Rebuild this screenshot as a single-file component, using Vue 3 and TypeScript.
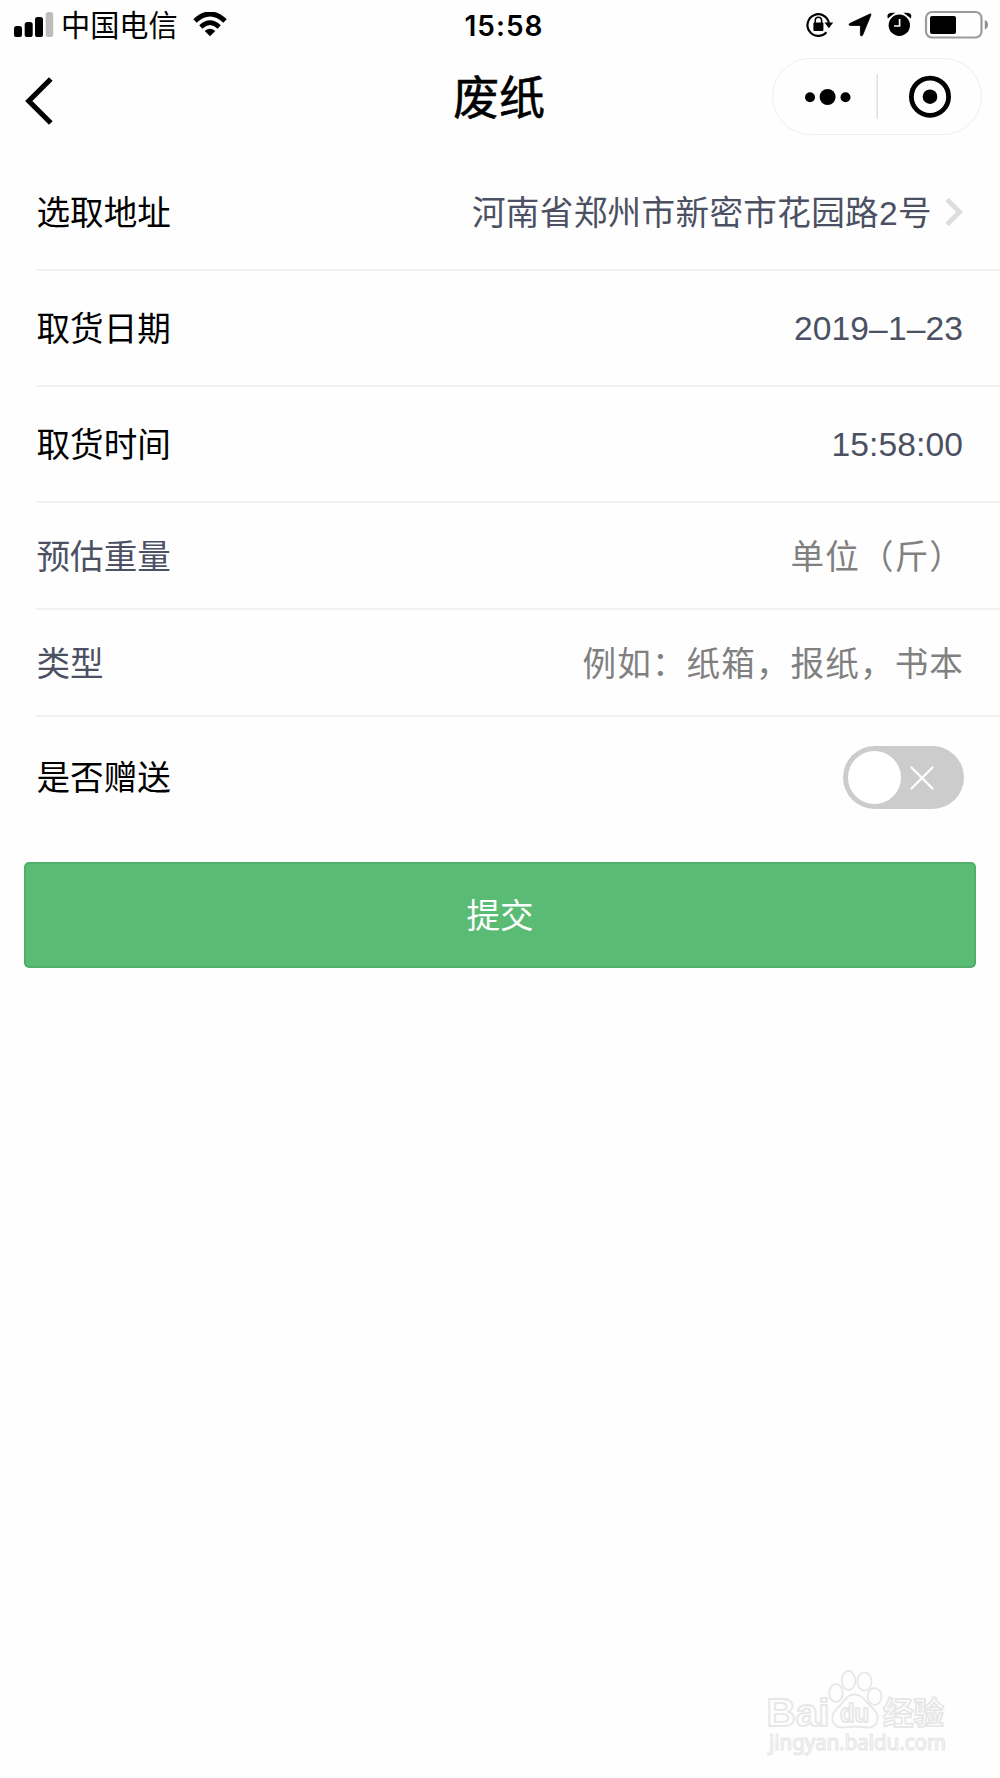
<script setup lang="ts">
import { ref } from 'vue'

interface Row {
  label: string
  value: string
  kind: 'picker' | 'link' | 'input'
}

const rows: Row[] = [
  { label: '选取地址', value: '河南省郑州市新密市花园路2号', kind: 'link' },
  { label: '取货日期', value: '2019–1–23', kind: 'picker' },
  { label: '取货时间', value: '15:58:00', kind: 'picker' },
  { label: '预估重量', value: '单位（斤）', kind: 'input' },
  { label: '类型', value: '例如：纸箱，报纸，书本', kind: 'input' },
]
const gift = ref(false)
</script>

<template>
  <div class="screen">
    <header class="status">
      <div class="side">
        <svg class="signal" width="40" height="26" viewBox="0 0 40 26">
          <rect x="0" y="14" width="8" height="11" rx="2.6" />
          <rect x="10.7" y="10" width="8" height="15" rx="2.6" />
          <rect x="21" y="5" width="8" height="20" rx="2.6" />
          <rect x="31.7" y="0" width="7.5" height="25" rx="2.6" fill="#bdbdbd" />
        </svg>
        <span class="carrier">中国电信</span>
        <svg class="wifi" width="34" height="26" viewBox="0 0 34 26">
          <path d="M2 9Q17-5 32 9" fill="none" stroke="#000" stroke-width="5" />
          <path d="M7.8 15Q17 6.4 26.2 15" fill="none" stroke="#000" stroke-width="4.6" />
          <path d="M11.7 19Q17 14.4 22.3 19L17 24.2Z" />
        </svg>
      </div>
      <span class="clock">15:58</span>
      <svg class="indicators" width="184" height="30" viewBox="0 0 184 30">
        <path d="M22.4 23.2A10.8 10.8 0 1 1 24.9 14" fill="none" stroke="#000" stroke-width="2.2" />
        <path d="M20.4 13.6H29.2L24.9 19.2Z" />
        <rect x="9.4" y="13.6" width="10" height="8.4" rx="1" />
        <path d="M11.2 14V11.5A3.2 3.2 0 0 1 17.6 11.5V14" fill="none" stroke="#000" stroke-width="1.5" />
        <path d="M65.5 5.2Q67.4 4.2 66.8 6.2L58.6 26.2Q57.2 28 56.4 26V17.3Q56.4 16.5 55.4 16.5H46Q44 15.6 45.8 14.4Z" stroke="#000" stroke-width="0.8" />
        <circle cx="95.3" cy="16.2" r="10.7" />
        <path d="M95.6 10V17H90" fill="none" stroke="#fff" stroke-width="1.7" />
        <path d="M84.3 8.2Q83.4 4.6 88.8 4.5Z M106.4 8.2Q107.3 4.6 101.9 4.5Z" stroke="#000" stroke-width="1.6" />
        <rect x="122" y="3" width="55.5" height="25.5" rx="6" fill="none" stroke="#9b9b9b" stroke-width="2.2" />
        <rect x="126" y="7" width="26" height="18" rx="2" />
        <path d="M180.8 11V20.5Q184 19 184 15.7Q184 12.5 180.8 11Z" fill="#8e8e8e" />
      </svg>
    </header>

    <nav class="navbar">
      <svg class="back" width="30" height="50" viewBox="0 0 30 50">
        <path d="M26.8 3L4.8 25L26.8 47" fill="none" stroke="#000" stroke-width="5.2" />
      </svg>
      <h1>废纸</h1>
      <div class="capsule">
        <svg width="208" height="75" viewBox="0 0 208 75">
          <circle cx="37" cy="38.3" r="5" />
          <circle cx="54.6" cy="38" r="8" />
          <circle cx="72.5" cy="38.3" r="5" />
          <path d="M104.2 15V60" stroke="#dcdcdc" stroke-width="1.3" />
          <circle cx="157" cy="37.7" r="18.6" fill="none" stroke="#000" stroke-width="4.8" />
          <circle cx="157" cy="37.7" r="7.3" />
        </svg>
      </div>
    </nav>

    <main>
      <section class="form">
        <div v-for="row in rows" :key="row.label" class="row" :class="row.kind">
          <span class="label">{{ row.label }}</span>
          <span class="value">{{ row.value }}</span>
          <svg v-if="row.kind === 'link'" class="arrow" width="20" height="30" viewBox="0 0 20 30">
            <path d="M3 2.5L15.5 15L3 27.5" fill="none" stroke="#dcdddf" stroke-width="4.8" />
          </svg>
        </div>
        <div class="row gift">
          <span class="label">是否赠送</span>
          <button class="switch" :class="{ on: gift }" @click="gift = !gift">
            <span class="knob"></span>
            <svg class="cross" width="24" height="24" viewBox="0 0 24 24">
              <path d="M1.5 1.5L22.5 22.5M22.5 1.5L1.5 22.5" stroke="#fff" stroke-width="2.3" stroke-linecap="round" />
            </svg>
          </button>
        </div>
      </section>
      <button class="submit">提交</button>
    </main>

    <svg class="watermark" width="220" height="120" viewBox="0 0 220 120">
      <g class="outline">
        <text x="16.5" y="76" font-size="39" font-weight="700" textLength="63" lengthAdjust="spacingAndGlyphs">Bai</text>
        <ellipse cx="86" cy="43" rx="6.8" ry="9" />
        <ellipse cx="98.5" cy="30.5" rx="6.8" ry="9.5" />
        <ellipse cx="114.5" cy="31.5" rx="7" ry="9.2" />
        <ellipse cx="124.5" cy="46.5" rx="7" ry="8.5" />
        <path d="M104.5 44.5C96 44.5 95 52 87 58.5C79 66 82 77.5 92 77.5C97 77.5 99 76.5 105 76.5C110 76.5 113 77.5 118 77.5C128 77.5 131 66 123 58.5C115 52 113 44.5 104.5 44.5Z" />
        <text x="90" y="72" font-size="25" font-weight="700" textLength="29" lengthAdjust="spacingAndGlyphs">du</text>
        <text class="cn" x="133" y="74" font-size="31" font-weight="700" textLength="61" lengthAdjust="spacingAndGlyphs">经验</text>
        <text class="url" x="19" y="100" font-size="21" textLength="177" lengthAdjust="spacingAndGlyphs">jingyan.baidu.com</text>
      </g>
    </svg>
  </div>
</template>

<style>
body {
  margin: 0;
  background: #fefefe;
}
</style>

<style scoped>
.screen {
  position: relative;
  width: 1000px;
  height: 1778px;
  overflow: hidden;
  background: #fefefe;
  color: #000;
  font-family: "Liberation Sans", "Noto Sans CJK SC", sans-serif;
}
svg {
  display: block;
  flex: none;
}
.status {
  display: grid;
  grid-template-columns: 1fr auto 1fr;
  align-items: center;
  height: 50px;
  padding: 0 12px 0 14px;
}
.side {
  display: flex;
  align-items: center;
}
.carrier {
  margin-left: 7px;
  padding-top: 2px;
  font-size: 29.2px;
  line-height: 48px;
}
.wifi {
  margin-left: 15px;
}
.clock {
  padding: 1px 0 0 6px;
  font-family: Inter, sans-serif;
  font-size: 28px;
  font-weight: 600;
  letter-spacing: 1px;
}
.indicators {
  justify-self: end;
  margin: 0 0 2px;
}
.navbar {
  display: grid;
  grid-template-columns: 1fr auto 1fr;
  align-items: center;
  box-sizing: border-box;
  height: 105px;
  padding: 0 18px 0 24px;
}
.back {
  margin-bottom: 3px;
}
h1 {
  margin: 0 0 9px;
  padding-right: 8px;
  font-size: 46px;
  font-weight: 400;
  line-height: 60px;
  -webkit-text-stroke: 0.6px #000;
}
.capsule {
  justify-self: end;
  margin-bottom: 12px;
  border: 1px solid #eee;
  border-radius: 39px;
}
.form {
  padding-left: 36px;
}
.row {
  display: flex;
  align-items: center;
  box-sizing: border-box;
  height: 116px;
  padding: 0 36px 0 0.5px;
  border-bottom: 2px solid #f1f1f1;
  font-size: 33.6px;
  line-height: 50px;
}
.label {
  flex: 1;
  padding-top: 4px;
}
.value {
  padding-top: 4px;
  color: #4b5162;
}
.link .value {
  letter-spacing: 0.35px;
}
.picker .value {
  padding-top: 1px;
  margin-right: 1px;
  letter-spacing: 0.1px;
}
.input {
  height: 107px;
}
.input .label {
  color: #4b5162;
}
.input .value {
  color: #808080;
  letter-spacing: 1.1px;
}
.arrow {
  margin-left: 12px;
}
.gift {
  height: 120px;
  border-bottom: 0;
}
.switch {
  display: flex;
  align-items: center;
  gap: 9px;
  width: 121px;
  height: 63px;
  padding: 0 5px;
  border: 0;
  border-radius: 32px;
  background: #ccc;
}
.switch.on {
  flex-direction: row-reverse;
  background: #5abb74;
}
.knob {
  width: 53px;
  height: 53px;
  border-radius: 50%;
  background: #fff;
}
.cross {
  margin-top: 2px;
}
.submit {
  display: block;
  width: 952px;
  height: 106px;
  margin: 25px 24px 0;
  padding: 0 0 3px;
  border: 2px solid #50ad6a;
  border-radius: 5px;
  background: #5abb74;
  color: #fff;
  font: 400 33.6px "Liberation Sans", "Noto Sans CJK SC", sans-serif;
}
.watermark {
  position: absolute;
  left: 750px;
  top: 1650px;
}
.outline {
  fill: #fefefe;
  stroke: #e7e7e7;
  stroke-width: 1.8px;
  font-family: "Liberation Sans", sans-serif;
}
.cn {
  font-family: "Noto Sans CJK SC", sans-serif;
}
.url {
  font-family: "Noto Sans", sans-serif;
  stroke-width: 1.2px;
}
</style>
